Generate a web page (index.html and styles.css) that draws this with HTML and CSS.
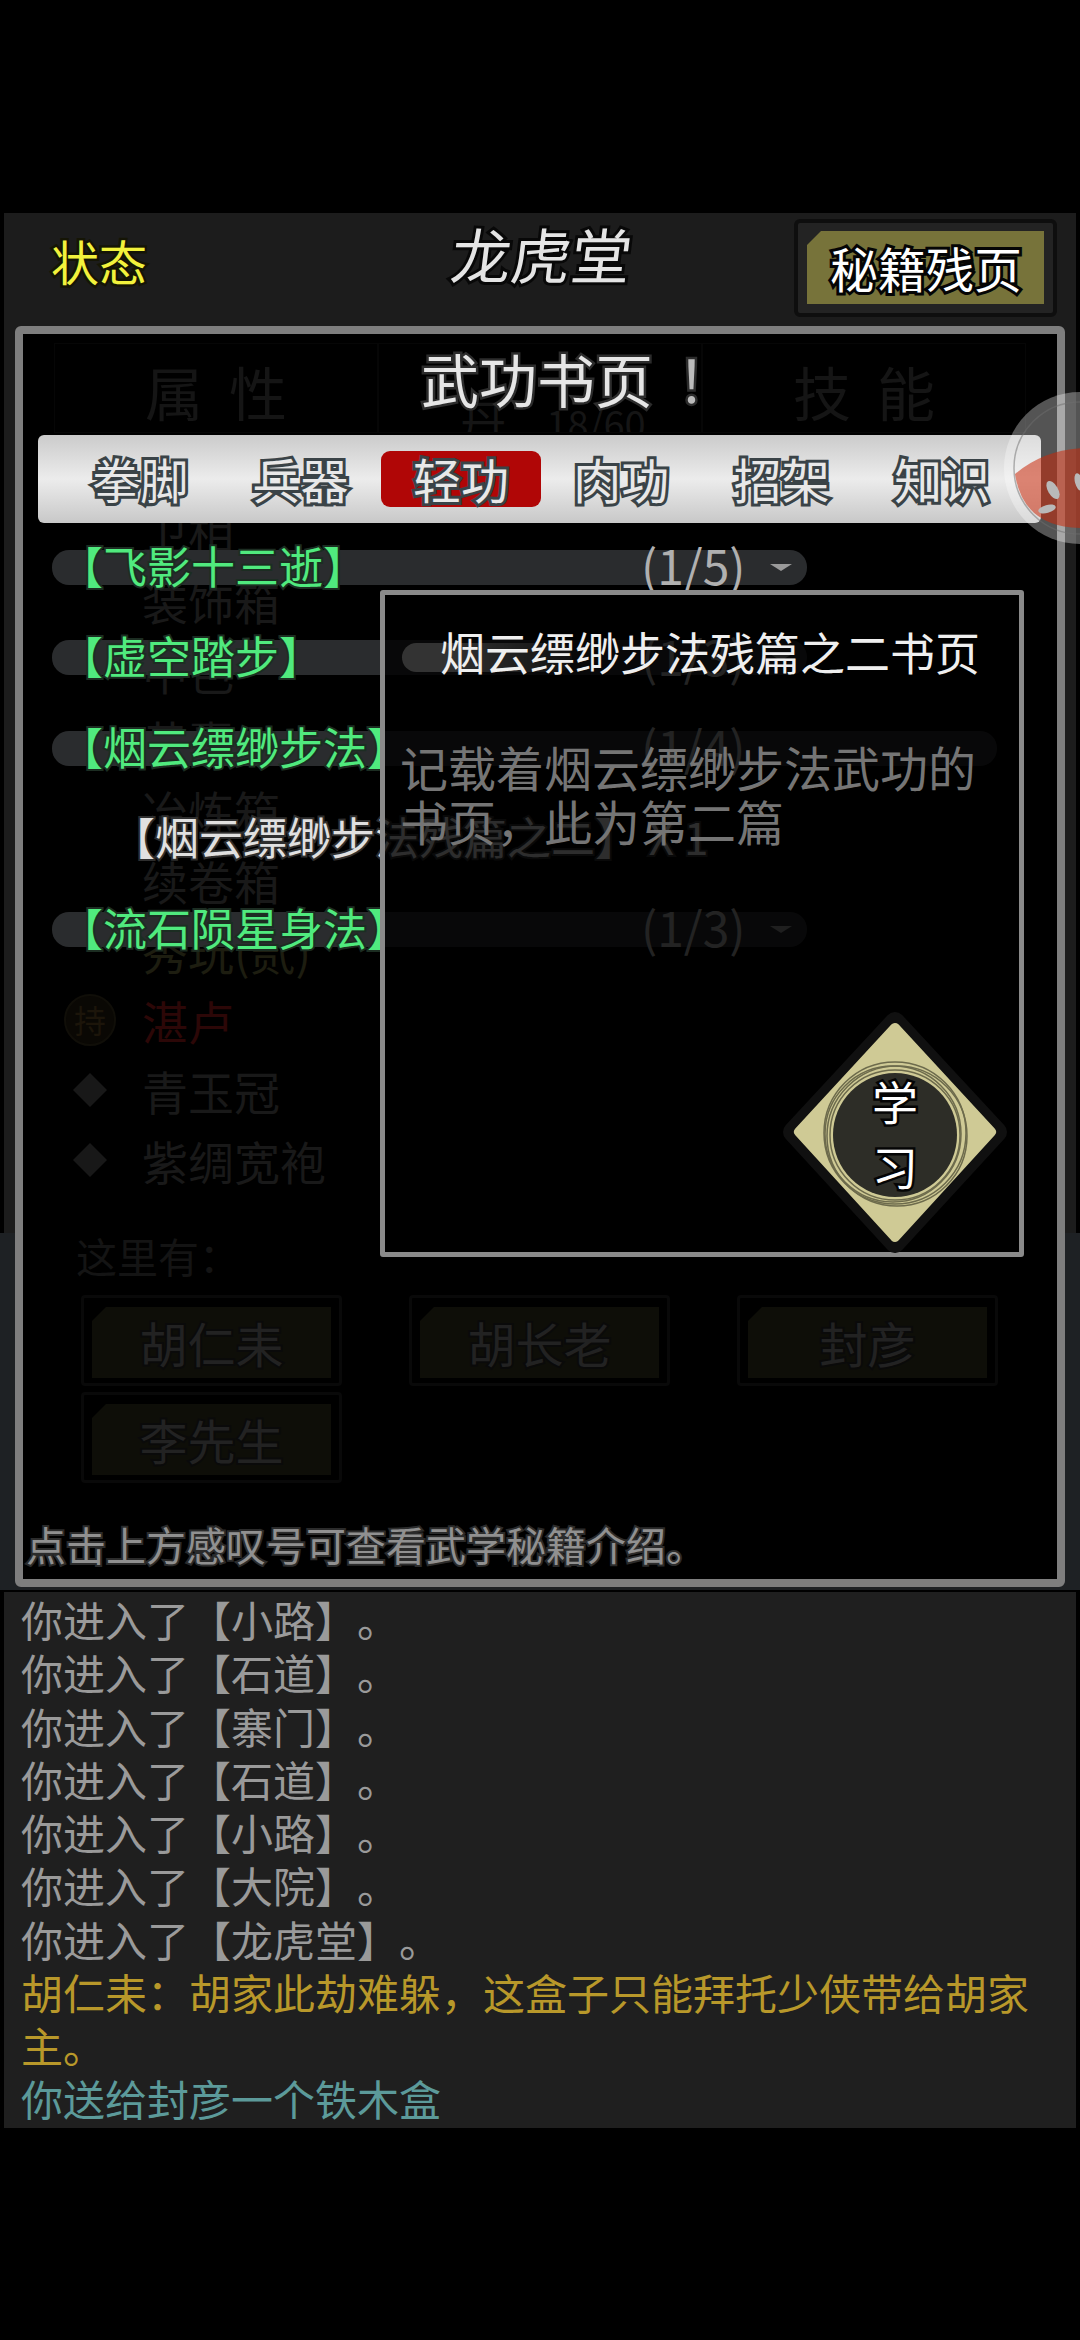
FILE: index.html
```html
<!DOCTYPE html>
<html lang="zh-CN">
<head>
    <meta charset="UTF-8">
    <meta name="viewport" content="width=device-width, initial-scale=1.0">
    <title>龙虎堂</title>
    <link rel="stylesheet" href="styles.css">
</head>
<body>
    <div class="screen">
        <div class="side-dim"></div>

        <div class="game">
            <div class="topbar">
                <div class="status">状态</div>
                <div class="place">龙虎堂</div>
                <div class="page-btn"><span class="page-btn-fill">秘籍残页</span></div>
            </div>

            <div class="panel">
                <!-- dimmed page behind the dialog -->
                <div class="under">
                    <div class="under-tabs">
                        <div class="under-tab">属性</div>
                        <div class="under-tab under-mid">丹<small>18/60</small></div>
                        <div class="under-tab">技能</div>
                    </div>
                    <div class="gear-list">
                        <div class="gear"><span class="gear-icon"></span>卫相</div>
                        <div class="gear"><span class="gear-icon"></span>装饰箱</div>
                        <div class="gear"><span class="gear-icon"></span>中色</div>
                        <div class="gear"><span class="gear-icon"></span>黄囊</div>
                        <div class="gear"><span class="gear-icon"></span>冶炼箱</div>
                        <div class="gear"><span class="gear-icon"></span>续卷箱</div>
                        <div class="gear gear-olive"><span class="gear-icon"></span>秀玩(贰)</div>
                        <div class="gear gear-red"><span class="gear-icon"><span class="held">持</span></span>湛卢</div>
                        <div class="gear"><span class="gear-icon"><span class="gem"></span></span>青玉冠</div>
                        <div class="gear"><span class="gear-icon"><span class="gem"></span></span>紫绸宽袍</div>
                    </div>
                    <div class="here">这里有：</div>
                    <div class="people">
                        <div class="person"><span>胡仁耒</span></div>
                        <div class="person"><span>胡长老</span></div>
                        <div class="person"><span>封彦</span></div>
                        <div class="person"><span>李先生</span></div>
                    </div>
                </div>

                <!-- book page dialog -->
                <div class="dialog">
                    <div class="dialog-title">武功书页<span class="bang">！</span></div>
                    <div class="kinds">
                        <div class="kind">拳脚</div>
                        <div class="kind">兵器</div>
                        <div class="kind kind-on">轻功</div>
                        <div class="kind">肉功</div>
                        <div class="kind">招架</div>
                        <div class="kind">知识</div>
                    </div>
                    <div class="books">
                        <div class="book">
                            <div class="bar">
                                <span class="book-name">【飞影十三逝】</span>
                                <span class="count">(1/5)</span><span class="arrow"></span>
                            </div>
                        </div>
                        <div class="book">
                            <div class="bar">
                                <span class="book-name">【虚空踏步】</span>
                                <span class="bar-thumb"></span>
                                <span class="count">(1/3)</span><span class="arrow"></span>
                            </div>
                        </div>
                        <div class="book">
                            <div class="bar bar-wide">
                                <span class="book-name">【烟云缥缈步法】</span>
                                <span class="count">(1/4)</span>
                            </div>
                        </div>
                        <div class="book book-child">【烟云缥缈步法残篇之二】 X 1</div>
                        <div class="book">
                            <div class="bar">
                                <span class="book-name">【流石陨星身法】</span>
                                <span class="count">(1/3)</span><span class="arrow"></span>
                            </div>
                        </div>
                    </div>
                    <div class="tip">点击上方感叹号可查看武学秘籍介绍。</div>
                </div>

                <div class="detail">
                    <div class="detail-title">烟云缥缈步法残篇之二书页</div>
                    <div class="detail-text">记载着烟云缥缈步法武功的书页，此为第二篇</div>
                    <div class="learn">
                        <svg class="learn-bg" width="240" height="255" viewBox="0 0 240 255">
                            <polygon points="120,17 222,127 120,238 18,127" fill="#cfca95" stroke="#101010" stroke-width="20" stroke-linejoin="round"/>
                            <polygon points="120,23 216,127 120,232 24,127" fill="#cfca95" stroke="#cfca95" stroke-width="10" stroke-linejoin="round"/>
                            <circle cx="120" cy="130" r="62" fill="#2d2d27"/>
                            <g fill="none" stroke="#6d6b4c" stroke-width="1.5">
                                <circle cx="120" cy="130" r="65"/>
                                <circle cx="118" cy="129" r="68"/>
                                <circle cx="122" cy="131" r="70"/>
                                <circle cx="120" cy="128" r="71"/>
                            </g>
                        </svg>
                        <div class="learn-label"><span>学</span><span>习</span></div>
                    </div>
                </div>
            </div>
        </div>

        <div class="log">
            <div class="line">你进入了【小路】。</div>
            <div class="line">你进入了【石道】。</div>
            <div class="line">你进入了【寨门】。</div>
            <div class="line">你进入了【石道】。</div>
            <div class="line">你进入了【小路】。</div>
            <div class="line">你进入了【大院】。</div>
            <div class="line">你进入了【龙虎堂】。</div>
            <div class="line line-talk">胡仁耒：胡家此劫难躲，这盒子只能拜托少侠带给胡家主。</div>
            <div class="line line-give">你送给封彦一个铁木盒</div>
        </div>

        <svg class="bubble" width="152" height="152" viewBox="0 0 152 152">
            <circle cx="77" cy="76" r="76" fill="rgba(255,255,255,0.33)"/>
            <circle cx="77" cy="76" r="66" fill="none" stroke="rgba(110,110,110,0.5)" stroke-width="1.5"/>
            <path d="M12 82 Q40 58 80 56 L152 56 L152 136 L80 136 Q20 136 12 82 Z" fill="rgba(200,40,10,0.55)"/>
            <ellipse cx="50" cy="98" rx="5" ry="10" transform="rotate(-30 50 98)" fill="#b9b9b9"/>
            <ellipse cx="44" cy="117" rx="9" ry="4" transform="rotate(-15 44 117)" fill="#b9b9b9"/>
            <ellipse cx="76" cy="90" rx="4" ry="9" transform="rotate(-15 76 90)" fill="#b9b9b9"/>
        </svg>
    </div>
</body>
</html>
```

FILE: styles.css
```css
* {
    box-sizing: border-box;
}
html, body {
    margin: 0;
    padding: 0;
    background-color: #000;
}
body {
    font-family: "Noto Sans CJK SC", "Noto Sans", sans-serif;
    color: #ddd;
    text-spacing-trim: space-all;
}
.screen {
    position: relative;
    width: 1080px;
    height: 2340px;
    padding-top: 213px;
    overflow: hidden;
}
.side-dim {
    position: absolute;
    left: 0;
    right: 0;
    top: 1233px;
    height: 357px;
    background-color: #1e2124;
    z-index: 1;
}
.game {
    width: 1072px;
    height: 1377px;
    margin-left: 4px;
    background-color: #1c1c1c;
}

/* top bar */
.topbar {
    display: grid;
    grid-template-columns: 1fr auto 1fr;
    height: 113px;
}
.status {
    padding: 19px 0 0 47px;
    font-size: 48px;
    line-height: 56px;
    color: #f2f23c;
    -webkit-text-stroke: 5px #151505;
    paint-order: stroke fill;
}
.place {
    padding-top: 6px;
    font-size: 60px;
    line-height: 68px;
    color: #e4e4e4;
    transform: skewX(-7deg);
    -webkit-text-stroke: 6px #080808;
    paint-order: stroke fill;
}
.page-btn {
    justify-self: end;
    width: 263px;
    height: 98px;
    margin: 6px 19px 0 0;
    padding: 8px 9px;
    background-color: #232323;
    border: 4px solid #0e0e0e;
    border-radius: 6px;
}
.page-btn-fill {
    display: block;
    height: 73px;
    padding-left: 23px;
    background-color: #77733a;
    clip-path: polygon(14px 0, 100% 0, 100% 100%, 0 100%, 0 14px);
    font-size: 48px;
    line-height: 72px;
    color: #fff;
    white-space: nowrap;
    -webkit-text-stroke: 6px #050505;
    paint-order: stroke fill;
}

/* main panel */
.panel {
    position: relative;
    z-index: 2;
    width: 1050px;
    height: 1261px;
    margin-left: 11px;
    background-color: #000;
    border: 8px solid #7e7e7e;
    border-radius: 6px;
}
.under {
    position: absolute;
    top: 0;
    left: 0;
    right: 0;
    bottom: 0;
}
.under-tabs {
    display: grid;
    grid-template-columns: repeat(3, 324px);
    height: 90px;
    margin: 9px 0 0 31px;
}
.under-tab {
    border: 1px solid #060606;
    padding: 12px 0 0 26px;
    font-size: 58px;
    line-height: 70px;
    letter-spacing: 26px;
    text-align: center;
    color: #151515;
    overflow: hidden;
}
.under-mid {
    padding-top: 40px;
    letter-spacing: 0;
    font-size: 46px;
}
.under-mid small {
    margin-left: 40px;
    font-size: 38px;
}
.gear-list {
    margin: 62px 0 0 24px;
}
.gear {
    display: flex;
    align-items: center;
    height: 70px;
    font-size: 46px;
    color: #191919;
}
.gear-icon {
    display: flex;
    align-items: center;
    justify-content: center;
    width: 86px;
    margin-right: 9px;
}
.gear-olive {
    color: #1d1d10;
}
.gear-red {
    color: #2c0707;
}
.held {
    width: 52px;
    height: 52px;
    border: 2px solid #100e08;
    border-radius: 50%;
    background-color: #0a0804;
    font-size: 32px;
    line-height: 46px;
    text-align: center;
    color: #1c150a;
}
.gem {
    width: 24px;
    height: 24px;
    background-color: #181818;
    transform: rotate(45deg);
}
.here {
    margin: 35px 0 0 53px;
    font-size: 41px;
    line-height: 50px;
    color: #141414;
}
.people {
    display: grid;
    grid-template-columns: repeat(3, 261px);
    grid-auto-rows: 91px;
    column-gap: 67px;
    row-gap: 6px;
    margin: 15px 0 0 58px;
}
.person {
    padding: 9px 8px 5px;
    border: 3px solid #090909;
    border-radius: 4px;
}
.person span {
    display: block;
    height: 100%;
    background-color: #0e0e08;
    clip-path: polygon(14px 0, 100% 0, 100% 100%, 0 100%, 0 14px);
    font-size: 48px;
    line-height: 70px;
    text-align: center;
    color: #222;
    -webkit-text-stroke: 4px #0a0a0a;
    paint-order: stroke fill;
}

/* dialog */
.dialog {
    position: absolute;
    top: 0;
    left: 0;
    right: 0;
    bottom: 0;
    display: flex;
    flex-direction: column;
}
.dialog-title {
    height: 101px;
    padding: 9px 0 0 76px;
    font-size: 58px;
    line-height: 70px;
    text-align: center;
    color: #e6e6e6;
    -webkit-text-stroke: 5px #2c2c2c;
    paint-order: stroke fill;
}
.bang {
    margin-left: 24px;
    color: #bbb;
}
.kinds {
    display: grid;
    grid-template-columns: repeat(6, 160.4px);
    align-items: center;
    width: 1003px;
    height: 88px;
    margin-left: 15px;
    padding-left: 22px;
    background: linear-gradient(#cbcbcb, #ececec 50%, #c8c8c8);
    border-radius: 6px;
}
.kind {
    height: 56px;
    font-size: 48px;
    line-height: 54px;
    text-align: center;
    color: #e8e8e8;
    -webkit-text-stroke: 6px #3a4347;
    paint-order: stroke fill;
}
.kind-on {
    background-color: #b00606;
    border-radius: 9px;
}
.books {
    margin-top: -1px;
}
.book {
    display: flex;
    align-items: center;
    height: 90.5px;
}
.bar {
    position: relative;
    display: grid;
    grid-template-columns: 582px auto auto;
    grid-template-rows: 35px;
    align-items: center;
    justify-content: start;
    width: 755px;
    height: 35px;
    margin-left: 29px;
    padding-left: 7px;
    background-color: #2a2c2e;
    border-radius: 17px;
}
.bar-wide {
    width: 945px;
}
.book-name {
    margin-bottom: 5px;
    font-size: 44px;
    line-height: 50px;
    color: #50ea7e;
    white-space: nowrap;
    -webkit-text-stroke: 4px #1c2d22;
    paint-order: stroke fill;
}
.count {
    margin-bottom: 6px;
    font-size: 48px;
    line-height: 50px;
    color: #b0b0b0;
}
.arrow {
    width: 0;
    height: 0;
    margin-left: 24px;
    border-left: 11px solid transparent;
    border-right: 11px solid transparent;
    border-top: 7px solid #9a9a9a;
}
.bar-thumb {
    position: absolute;
    left: 350px;
    top: 3px;
    width: 170px;
    height: 29px;
    background: linear-gradient(90deg, #fff, #fff 22%, #555);
    border-radius: 15px;
}
.book-child {
    padding: 0 0 5px 88px;
    font-size: 44px;
    color: #e0e0e0;
    white-space: nowrap;
    -webkit-text-stroke: 4px #2e2e2e;
    paint-order: stroke fill;
}
.tip {
    margin-top: auto;
    padding: 0 0 10px 3px;
    font-size: 40px;
    line-height: 50px;
    color: #909090;
    -webkit-text-stroke: 4px #2b2b2b;
    paint-order: stroke fill;
}

/* detail popup */
.detail {
    position: absolute;
    left: 357px;
    top: 256px;
    width: 644px;
    height: 667px;
    background-color: rgba(0, 0, 0, 0.8);
    border: 5px solid #8a8a8a;
    border-radius: 3px;
}
.detail-title {
    padding: 30px 0 0 55px;
    font-size: 45px;
    line-height: 54px;
    color: #efefef;
    white-space: nowrap;
}
.detail-text {
    margin-top: 60px;
    padding: 0 30px 0 15px;
    font-size: 48px;
    line-height: 54px;
    color: #757575;
}
.learn {
    position: absolute;
    left: 390px;
    top: 410px;
    width: 240px;
    height: 255px;
}
.learn-bg {
    display: block;
}
.learn-label {
    position: absolute;
    top: 0;
    left: 0;
    right: 0;
    bottom: 0;
    display: flex;
    flex-direction: column;
    align-items: center;
    justify-content: center;
    font-size: 46px;
    line-height: 65px;
    color: #fff;
    -webkit-text-stroke: 5px #050505;
    paint-order: stroke fill;
}

/* message log */
.log {
    width: 1072px;
    height: 536px;
    margin: 2px 0 0 4px;
    padding: 0 17px;
    background-color: #1f1f1f;
    font-size: 42px;
    line-height: 53.25px;
    color: #9a9a9a;
}
.line-talk {
    color: #b8982a;
}
.line-give {
    color: #5c9a9a;
}

/* floating ball */
.bubble {
    position: absolute;
    left: 1003px;
    top: 392px;
    z-index: 3;
}
```
